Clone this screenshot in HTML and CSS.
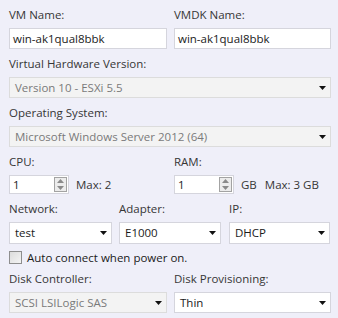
FILE: index.html
```html
<!DOCTYPE html>
<html lang="en">
<head>
    <meta charset="UTF-8">
    <title>VM Settings</title>
    <link rel="stylesheet" href="styles.css">
</head>
<body>
    <div class="panel">
        <div class="cols-2">
            <div class="field">
                <label class="lbl">VM Name:</label>
                <div class="box text">win-ak1qual8bbk</div>
            </div>
            <div class="field">
                <label class="lbl">VMDK Name:</label>
                <div class="box text">win-ak1qual8bbk</div>
            </div>
        </div>

        <div class="field">
            <label class="lbl">Virtual Hardware Version:</label>
            <div class="box select disabled">
                <span>Version 10 - ESXi 5.5</span>
                <svg class="arrow" width="7" height="4" viewBox="0 0 7 4"><path d="M0 0H7L3.5 4Z"/></svg>
            </div>
        </div>

        <div class="field">
            <label class="lbl">Operating System:</label>
            <div class="box select disabled">
                <span>Microsoft Windows Server 2012 (64)</span>
                <svg class="arrow" width="7" height="4" viewBox="0 0 7 4"><path d="M0 0H7L3.5 4Z"/></svg>
            </div>
        </div>

        <div class="cols-2">
            <div class="field">
                <label class="lbl">CPU:</label>
                <div class="spin-row">
                    <div class="spinner">
                        <span>1</span>
                        <div class="spin-btns">
                            <svg width="7" height="4" viewBox="0 0 7 4"><path d="M0 4H7L3.5 0Z"/></svg>
                            <svg width="7" height="4" viewBox="0 0 7 4"><path d="M0 0H7L3.5 4Z"/></svg>
                        </div>
                    </div>
                    <span class="note">Max: 2</span>
                </div>
            </div>
            <div class="field">
                <label class="lbl">RAM:</label>
                <div class="spin-row">
                    <div class="spinner">
                        <span>1</span>
                        <div class="spin-btns">
                            <svg width="7" height="4" viewBox="0 0 7 4"><path d="M0 4H7L3.5 0Z"/></svg>
                            <svg width="7" height="4" viewBox="0 0 7 4"><path d="M0 0H7L3.5 4Z"/></svg>
                        </div>
                    </div>
                    <span class="note">GB</span>
                    <span class="note max">Max: 3 GB</span>
                </div>
            </div>
        </div>

        <div class="cols-3">
            <div class="field">
                <label class="lbl">Network:</label>
                <div class="box select tall">
                    <span>test</span>
                    <svg class="arrow" width="7" height="4" viewBox="0 0 7 4"><path d="M0 0H7L3.5 4Z"/></svg>
                </div>
            </div>
            <div class="field">
                <label class="lbl">Adapter:</label>
                <div class="box select tall">
                    <span>E1000</span>
                    <svg class="arrow" width="7" height="4" viewBox="0 0 7 4"><path d="M0 0H7L3.5 4Z"/></svg>
                </div>
            </div>
            <div class="field">
                <label class="lbl">IP:</label>
                <div class="box select tall">
                    <span>DHCP</span>
                    <svg class="arrow" width="7" height="4" viewBox="0 0 7 4"><path d="M0 0H7L3.5 4Z"/></svg>
                </div>
            </div>
        </div>

        <div class="check-row">
            <span class="checkbox"></span>
            <span>Auto connect when power on.</span>
        </div>

        <div class="cols-2">
            <div class="field">
                <label class="lbl">Disk Controller:</label>
                <div class="box select disabled">
                    <span>SCSI LSILogic SAS</span>
                    <svg class="arrow" width="7" height="4" viewBox="0 0 7 4"><path d="M0 0H7L3.5 4Z"/></svg>
                </div>
            </div>
            <div class="field">
                <label class="lbl">Disk Provisioning:</label>
                <div class="box select">
                    <span>Thin</span>
                    <svg class="arrow" width="7" height="4" viewBox="0 0 7 4"><path d="M0 0H7L3.5 4Z"/></svg>
                </div>
            </div>
        </div>
    </div>
</body>
</html>
```

FILE: styles.css
```css
:root {
    --bg: #efeff9;
    --border: #d5d5dd;
    --text: #1a1a1a;
    --label: #363636;
    --muted: #7a7a7a;
}
body { margin: 0; background-color: var(--bg); font-family: 'Open Sans', 'Noto Sans', sans-serif; font-size: 11.5px; color: var(--text); }
.panel { padding: 0 7px 0 9px; }
.cols-2 { display: grid; grid-template-columns: 158px 157px; gap: 7px; }
.cols-3 { display: grid; grid-template-columns: 103px 102px 102px; gap: 7px 7px; }
.cols-3 .field:last-child { margin-left: 1px; }
.lbl { display: flex; align-items: flex-end; height: 28px; padding-bottom: 5px; box-sizing: border-box; line-height: 16px; color: var(--label); }

/* Campos */
.box { height: 21px; box-sizing: border-box; border: 1px solid var(--border); background-color: #fff; display: flex; align-items: center; line-height: 16px; white-space: nowrap; }
.box.text { padding-left: 3px; }
.select { padding: 0 4px 0 5px; justify-content: space-between; }
.select.tall { height: 22px; }
.select.disabled { background-color: #f3f3f3; color: var(--muted); border-color: #dcdcdc; }
.arrow { fill: #111; flex-shrink: 0; }

/* Spinners */
.spin-row { display: flex; align-items: center; height: 19px; }
.spinner { width: 60px; height: 19px; box-sizing: border-box; border: 1px solid var(--border); background-color: #fff; display: flex; align-items: center; justify-content: space-between; padding: 0 1px 0 3px; }
.spin-btns { width: 13px; height: 15px; box-sizing: border-box; border: 1px solid #a3a3a3; background-color: #ececec; display: flex; flex-direction: column; justify-content: space-around; align-items: center; }
.spin-btns svg { fill: #8a8a8a; }
.note { margin-left: 7px; color: var(--label); }
.note.max { margin-left: 8px; }

.check-row { display: flex; align-items: center; gap: 5px; height: 20px; padding-top: 7px; box-sizing: border-box; color: var(--text); }
.checkbox { width: 13px; height: 13px; box-sizing: border-box; border: 1px solid #8e8e8e; background: linear-gradient(135deg, #dcdcdc, #f4f4f4); }
```
